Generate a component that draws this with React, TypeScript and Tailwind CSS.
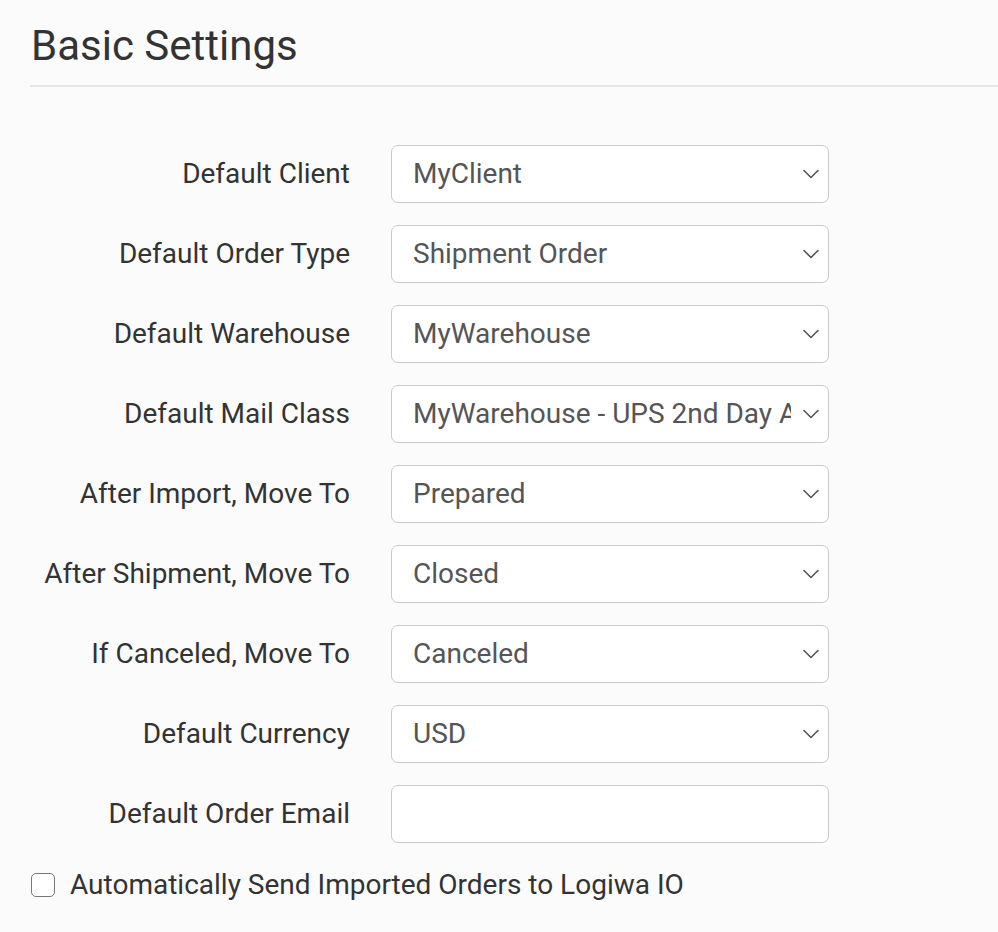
import React from "react";

const rows: { label: string; value?: string }[] = [
  { label: "Default Client", value: "MyClient" },
  { label: "Default Order Type", value: "Shipment Order" },
  { label: "Default Warehouse", value: "MyWarehouse" },
  { label: "Default Mail Class", value: "MyWarehouse - UPS 2nd Day Air" },
  { label: "After Import, Move To", value: "Prepared" },
  { label: "After Shipment, Move To", value: "Closed" },
  { label: "If Canceled, Move To", value: "Canceled" },
  { label: "Default Currency", value: "USD" },
  { label: "Default Order Email" },
];

function Chevron() {
  return (
    <svg width="16" height="10" viewBox="0 0 16 10" fill="none" className="shrink-0">
      <path d="M1 1.5 L8 8.5 L15 1.5" stroke="#555" strokeWidth="1.6" strokeLinecap="round" strokeLinejoin="round" />
    </svg>
  );
}

export default function App() {
  return (
    <div
      className="min-h-[932px] w-[998px] bg-[#fbfbfb] text-[#333]"
      style={{ fontFamily: "Roboto, 'Liberation Sans', sans-serif" }}
    >
      <div className="pl-[31px] pt-[22px]">
        <h1 className="text-[42px] leading-[48px] font-normal text-[#333]">Basic Settings</h1>
      </div>
      <div className="ml-[30px] mt-[15px] h-[2px] bg-[#e6e6e6]" />
      <div className="pl-[31px] pt-[58px] grid grid-cols-[319px_438px] gap-x-[41px] gap-y-[22px]">
        {rows.map((r) => (
          <React.Fragment key={r.label}>
            <div className="h-[58px] flex items-center justify-end text-[28px] leading-[32px] text-[#333] whitespace-nowrap">{r.label}</div>
            <div className="h-[58px] rounded-[7px] border border-[#c9c9c9] bg-white flex items-center pl-[21px] pr-[9px]">
              {r.value !== undefined && (
                <>
                  <div className="flex-1 overflow-hidden whitespace-nowrap text-[28px] leading-[32px] text-[#555] mr-[12px]">{r.value}</div>
                  <Chevron />
                </>
              )}
            </div>
          </React.Fragment>
        ))}
      </div>
      <div className="pl-[31px] mt-[26px] flex items-center gap-[15px]">
        <div className="w-[24px] h-[24px] rounded-[5px] border-[1.5px] border-[#777] bg-white" />
        <span className="text-[28px] leading-[32px] text-[#333]">Automatically Send Imported Orders to Logiwa IO</span>
      </div>
    </div>
  );
}
